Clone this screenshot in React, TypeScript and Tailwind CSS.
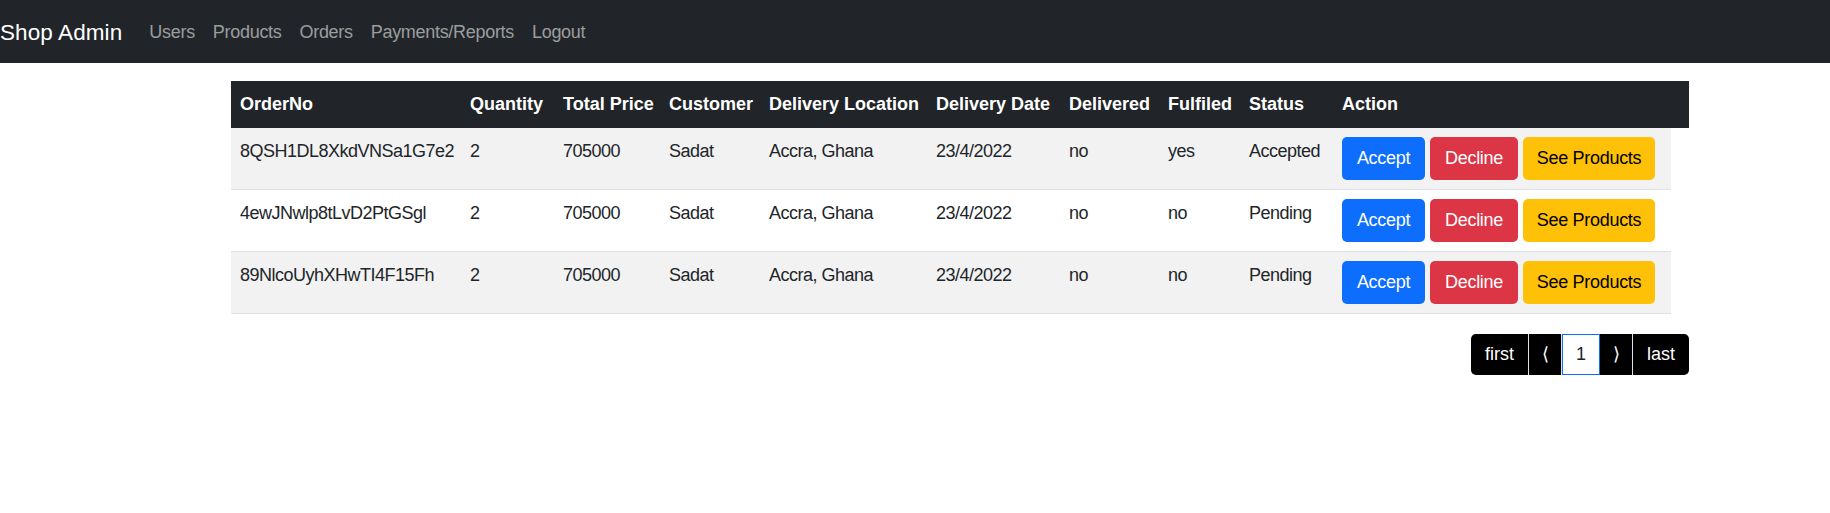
import React from 'react';

type Order = {
  id: string;
  qty: number;
  price: number;
  customer: string;
  location: string;
  date: string;
  delivered: string;
  fulfiled: string;
  status: string;
};

const orders: Order[] = [
  { id: '8QSH1DL8XkdVNSa1G7e2', qty: 2, price: 705000, customer: 'Sadat', location: 'Accra, Ghana', date: '23/4/2022', delivered: 'no', fulfiled: 'yes', status: 'Accepted' },
  { id: '4ewJNwlp8tLvD2PtGSgl', qty: 2, price: 705000, customer: 'Sadat', location: 'Accra, Ghana', date: '23/4/2022', delivered: 'no', fulfiled: 'no', status: 'Pending' },
  { id: '89NlcoUyhXHwTI4F15Fh', qty: 2, price: 705000, customer: 'Sadat', location: 'Accra, Ghana', date: '23/4/2022', delivered: 'no', fulfiled: 'no', status: 'Pending' },
];

// column widths, taken from the bootstrap table
const cols = ['w-[230px]', 'w-[93px]', 'w-[106px]', 'w-[100px]', 'w-[167px]', 'w-[133px]', 'w-[99px]', 'w-[81px]', 'w-[93px]'];

const headers = ['OrderNo', 'Quantity', 'Total Price', 'Customer', 'Delivery Location', 'Delivery Date', 'Delivered', 'Fulfiled', 'Status'];

export default function App() {
  return (
    <div className="min-h-[513px] bg-white text-[#212529] font-['Liberation_Sans',Arial,sans-serif] text-[18px] leading-[27px]">
      {/* Navbar */}
      <nav className="h-[63px] bg-[#212529] flex items-center pt-[2px]">
        <a href="#" className="text-white text-[22.5px] leading-[34px] mr-[18px] tracking-[0.1px]">
          Shop Admin
        </a>
        <div className="flex items-center">
          {['Users', 'Products', 'Orders', 'Payments/Reports', 'Logout'].map((l) => (
            <a key={l} href="#" className="px-[9px] text-[#9b9d9f] hover:text-white tracking-[-0.3px]">
              {l}
            </a>
          ))}
        </div>
      </nav>

      <div className="w-[1458px] ml-[231px] mt-[18px]">
        {/* Table header */}
        <div className="h-[47px] bg-[#212529] text-white font-bold flex">
          {headers.map((h, i) => (
            <div key={h} className={`${cols[i]} px-[9px] pt-[10px] whitespace-nowrap`}>
              {h}
            </div>
          ))}
          <div className="px-[9px] pt-[10px]">Action</div>
        </div>

        {/* Rows */}
        <div className="w-[1440px]">
          {orders.map((o, r) => (
            <div
              key={o.id}
              className={`flex h-[62px] border-b border-[#dee2e6] ${r % 2 === 0 ? 'bg-[#f2f2f2]' : 'bg-white'}`}
            >
              {[o.id, o.qty, o.price, o.customer, o.location, o.date, o.delivered, o.fulfiled, o.status].map((v, i) => (
                <div key={i} className={`${cols[i]} px-[9px] pt-[10px] whitespace-nowrap tracking-[-0.5px]`}>
                  {v}
                </div>
              ))}
              <div className="flex gap-[5px] pl-[9px] pt-[9px]">
                <button className="w-[83px] h-[43px] rounded-[5px] bg-[#0d6efd] text-white tracking-[-0.3px]">Accept</button>
                <button className="w-[88px] h-[43px] rounded-[5px] bg-[#dc3545] text-white tracking-[-0.3px]">Decline</button>
                <button className="w-[132px] h-[43px] rounded-[5px] bg-[#ffc107] text-black tracking-[-0.3px]">See Products</button>
              </div>
            </div>
          ))}
        </div>

        {/* Pagination */}
        <div className="flex justify-end mt-[20px]">
          <div className="flex h-[41px] rounded-[5px] overflow-hidden bg-black text-white">
            <button className="w-[58px] border-r border-[#dee2e6]">first</button>
            <button className="w-[33px] border-r border-[#dee2e6]">⟨</button>
            <button className="w-[38px] bg-white text-[#212529] border border-[#0d6efd]">1</button>
            <button className="w-[33px] border-r border-[#dee2e6]">⟩</button>
            <button className="w-[56px]">last</button>
          </div>
        </div>
      </div>
    </div>
  );
}
